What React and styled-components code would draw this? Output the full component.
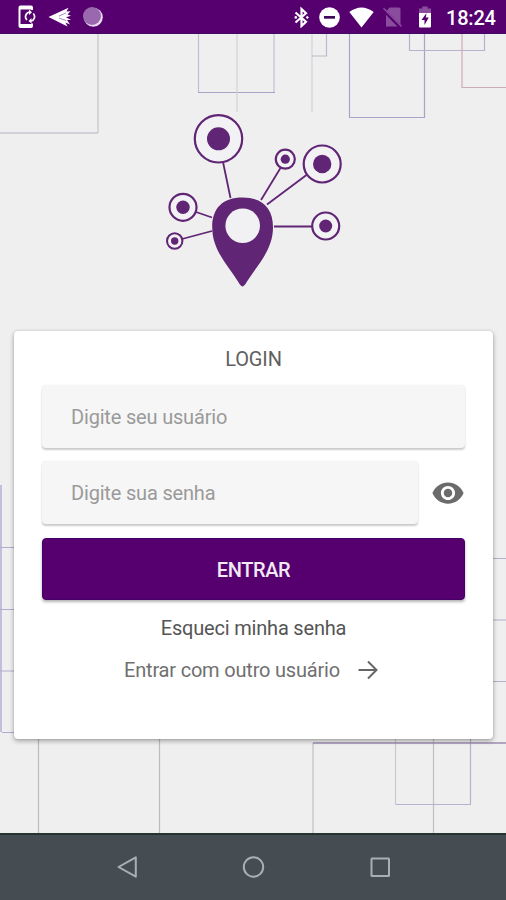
import React, { useState } from 'react';
import styled, { createGlobalStyle } from 'styled-components';

const GlobalStyle = createGlobalStyle`
  * {
    box-sizing: border-box;
  }

  body {
    margin: 0;
    background: #efefef;
    font-family: Roboto, 'Liberation Sans', sans-serif;
  }
`;

const Screen = styled.div`
  display: flex;
  flex-direction: column;
  width: 506px;
  height: 900px;
  overflow: hidden;
`;

const StatusBar = styled.header`
  display: flex;
  justify-content: space-between;
  align-items: center;
  flex: none;
  height: 34px;
  padding: 0 10px 0 18px;
  background: #560070;
  border-bottom: 1px solid #410a62;
  color: #fff;
`;

const StatusGroup = styled.div`
  display: flex;
  align-items: center;
  gap: ${(props) => props.$gap}px;
`;

const StatusIcon = styled.svg`
  display: block;
  flex: none;
  margin-left: ${(props) => props.$nudge || 0}px;
`;

const Clock = styled.span`
  width: 50px;
  margin-left: -1px;
  font-size: 20px;
  font-weight: 500;
  line-height: 24px;
  padding-top: 2px;
  letter-spacing: -0.2px;
  white-space: nowrap;
`;

const Main = styled.main`
  position: relative;
  display: flex;
  flex-direction: column;
  align-items: center;
  flex: 1;
  padding-top: 80px;
  background: #efefef;
`;

const Backdrop = styled.svg`
  position: absolute;
  top: 0;
  left: 0;
`;

const Logo = styled.svg`
  position: relative;
  display: block;
  flex: none;
  overflow: visible;
`;

const Card = styled.form`
  position: relative;
  display: flex;
  flex-direction: column;
  width: 479px;
  height: 408px;
  margin-top: 43px;
  margin-left: 1px;
  padding: 16px 28px 0;
  background: #fff;
  border-radius: 4px;
  box-shadow: 0 2px 5px rgba(0, 0, 0, 0.32), 0 0 2px rgba(0, 0, 0, 0.14);
`;

const Title = styled.h1`
  margin: 0 0 14px;
  font-size: 20px;
  font-weight: 400;
  line-height: 24px;
  letter-spacing: -0.1px;
  text-align: center;
  color: #606060;
`;

const Field = styled.input`
  display: block;
  width: 100%;
  min-width: 0;
  height: 63px;
  padding: 1px 29px 0;
  border: none;
  border-radius: 4px;
  outline: none;
  background: #f6f6f6;
  box-shadow: 0 2px 2px rgba(0, 0, 0, 0.2), 0 0 1px rgba(0, 0, 0, 0.12);
  font-family: inherit;
  font-size: 20px;
  letter-spacing: -0.18px;
  color: #555;

  &::placeholder {
    color: #9a9a9a;
    opacity: 1;
  }
`;

const PasswordRow = styled.div`
  display: flex;
  align-items: center;
  gap: 13px;
  margin: 13px 0 14px;
`;

const EyeButton = styled.button`
  display: flex;
  flex: none;
  padding: 0;
  border: none;
  background: none;
  color: #6b6b6b;
  cursor: pointer;
`;

const SubmitButton = styled.button`
  flex: none;
  height: 62px;
  padding: 1px 0 0;
  border: 1px solid #450068;
  border-radius: 4px;
  background: #560070;
  box-shadow: 0 2px 3px rgba(0, 0, 0, 0.3);
  font-family: inherit;
  font-size: 20px;
  font-weight: 500;
  letter-spacing: -0.4px;
  color: #f2e9f5;
  cursor: pointer;
`;

const LinkButton = styled.button`
  display: flex;
  justify-content: center;
  align-items: center;
  gap: 16px;
  margin-top: ${(props) => props.$top}px;
  padding: 0 ${(props) => props.$inset || 0}px 0 0;
  border: none;
  background: none;
  font-family: inherit;
  font-size: 20px;
  line-height: 24px;
  letter-spacing: -0.19px;
  color: ${(props) => props.$color};
  cursor: pointer;
`;

const NavBar = styled.nav`
  display: flex;
  justify-content: center;
  align-items: center;
  gap: 102px;
  flex: none;
  height: 67px;
  padding-bottom: 2px;
  border-top: 2px solid #27332f;
  background: #454d52;
`;

const NavIcon = styled.svg`
  display: block;
  fill: none;
  stroke: #a9b0b2;
  stroke-width: 2;
  stroke-linejoin: round;
`;

const lines = [
  ['M98 0V99', '#c4c1ca'],
  ['M0 99H98', '#b5b3bf'],
  ['M198.500 0V58M274 0V58', '#c3bfd2'],
  ['M198 58.500H275', '#aaa3c4'],
  ['M237 0V78M312 0V78', '#d3d1d8'],
  ['M312 22H326.500V0', '#bdb8cf'],
  ['M349.500 0V83.500H424.500V0', '#aaa3c9'],
  ['M409.500 0V16.500H484.500V0', '#b7b2ca'],
  ['M462 0V53.500H506', '#cfabb7'],
  ['M1 451V698', '#c4bedb', 2],
  ['M0 513.500H14M0 575.500H14M0 637H14M2 698.500H14', '#b2abcd'],
  ['M493 524.500H506M493 586H506M493 647.500H506', '#b5b0cb'],
  ['M38.500 704V800M159.500 704V800', '#bcbbbf'],
  ['M313 709V800M433.500 704V800', '#c0bec6'],
  ['M395.500 704V770', '#cbc8d2'],
  ['M470.500 704V770M395.500 770.500H471', '#b8b1d0'],
  ['M313 709H506', '#9c8db3', 1.5],
];

const nodes = [
  { cx: 53.5, cy: 24.8, r: 23.7, dot: 11.5, sw: 2.2 },
  { cx: 120.3, cy: 45.2, r: 9.5, dot: 4.6, sw: 2.2 },
  { cx: 157.2, cy: 50, r: 18.5, dot: 9.2, sw: 2.2 },
  { cx: 18, cy: 93.3, r: 13.5, dot: 6.7, sw: 2.2 },
  { cx: 9.7, cy: 127, r: 7.7, dot: 3.7, sw: 2 },
  { cx: 160.7, cy: 112, r: 13.5, dot: 6.5, sw: 2.2 },
];

const App = () => {
  const [showPassword, setShowPassword] = useState(false);

  return (
    <>
      <GlobalStyle />
      <Screen>
        <StatusBar>
          <StatusGroup $gap={12}>
            <StatusIcon width="18" height="24" viewBox="0 0 18 24">
              <path d="M14 5V2.500Q14 1.500 13 1.500H2.500Q1.500 1.500 1.500 2.500V21Q1.500 22 2.500 22H13Q14 22 14 21V18.500" fill="none" stroke="#fff" strokeWidth="2" />
              <path d="M1.500 3H14M1.500 20.500H14" stroke="#fff" strokeWidth="3" />
              <path d="M12 7.200A4.500 4.500 0 0 0 9 15M13 16A4.500 4.500 0 0 0 15.300 8.500" fill="none" stroke="#fff" strokeWidth="1.700" />
              <path d="M11 4.500V10L14 7.200ZM13.500 13V18.500L10.500 16Z" fill="#fff" />
            </StatusIcon>
            <StatusIcon width="24" height="20" viewBox="0 0 24 20">
              <path d="M0.500 10L20.500 0.800L18.500 4.500L22.500 4.300L19.500 7.500L23 8.800L18 10.200L23 13L19 13L22 17.500L17.500 15.500L19.500 19.500Z" fill="#fff" />
              <path d="M11 9L18 6M11 11L18 13.500" stroke="#8b54a0" strokeWidth="0.700" />
            </StatusIcon>
            <StatusIcon width="20" height="20" viewBox="0 0 20 20" $nudge={-1}>
              <circle cx="10.300" cy="10.300" r="9.500" fill="#eadcf0" />
              <circle cx="9" cy="9" r="9" fill="#9a68ae" />
            </StatusIcon>
          </StatusGroup>
          <StatusGroup $gap={10}>
            <StatusIcon width="15" height="22" viewBox="0 0 15 22">
              <path d="M1.500 6.500L12 15.800L7.500 20V3L12 7.200L1.500 16.500" fill="none" stroke="#fff" strokeWidth="2.200" />
              <path d="M13.300 9.700L14.900 11.400L13.300 13.100L11.700 11.400Z" fill="#fff" />
              <circle cx="1.800" cy="11.400" r="1.300" fill="#fff" />
            </StatusIcon>
            <StatusIcon width="21" height="22" viewBox="0 0 21 22">
              <circle cx="10.500" cy="11.500" r="10.300" fill="#fff" />
              <rect x="5" y="10" width="11" height="2.700" fill="#3c0a5c" />
            </StatusIcon>
            <StatusIcon width="25" height="22" viewBox="0 0 25 22" $nudge={-1}>
              <path d="M0.300 6Q12.500 -3 24.700 6L12.500 21.500Z" fill="#fff" />
            </StatusIcon>
            <StatusIcon width="19" height="22" viewBox="0 0 19 22" $nudge={-1}>
              <path d="M6.500 1.500H16Q17.500 1.500 17.500 3V20.500H3V5.500Z" fill="#8a4d9e" />
              <path d="M0 3.300L18.300 22" stroke="#560070" strokeWidth="3.400" />
              <path d="M0.500 2.300L18.500 20.500" stroke="#8a4d9e" strokeWidth="1.500" />
            </StatusIcon>
            <StatusIcon width="24" height="22" viewBox="0 0 24 22" $nudge={1}>
              <path d="M9.300 0.500H14.700V2.500H18V7H6V2.500H9.300Z" fill="#8a4d9e" />
              <path d="M6 7H18V20.500Q18 21.500 17 21.500H7Q6 21.500 6 20.500Z" fill="#fff" />
              <path d="M13.500 7L8.500 14H11.500V19L15.800 11.500H12.800Z" fill="#560070" />
            </StatusIcon>
            <Clock>18:24</Clock>
          </StatusGroup>
        </StatusBar>

        <Main>
          <Backdrop width="506" height="799" viewBox="0 0 506 799">
            {lines.map(([d, color, width]) => (
              <path key={d} d={d} fill="none" stroke={color} strokeWidth={width || 1.2} />
            ))}
          </Backdrop>

          <Logo width="176" height="174" viewBox="0 0 176 174">
            <g stroke="#602574" strokeWidth="1.800">
              <path d="M58 48L65.500 84" />
              <path d="M115.500 54L96 86" />
              <path d="M141.500 61L102 90.500" />
              <path d="M31 98L47 103.500" />
              <path d="M17 125L47 117" />
              <path d="M109 112.500H147" />
            </g>
            {nodes.map((node) => (
              <g key={node.cx}>
                <circle cx={node.cx} cy={node.cy} r={node.r} fill="#f2f1f3" stroke="#602574" strokeWidth={node.sw} />
                <circle cx={node.cx} cy={node.cy} r={node.dot} fill="#602574" />
              </g>
            ))}
            <path
              d="M77.500 172.500Q75.500 172 73 167.500C62 150 47.200 136 47.200 113C47.200 94 58 83.500 77.500 83.500S108 94 108 113C108 136 93 150 82 167.500Q79.500 172 77.500 172.500Z"
              fill="#602574"
            />
            <circle cx="77.700" cy="111.700" r="17.300" fill="#f1f0f2" />
          </Logo>

          <Card onSubmit={(e) => e.preventDefault()}>
            <Title>LOGIN</Title>
            <Field placeholder="Digite seu usuário" />
            <PasswordRow>
              <Field type={showPassword ? 'text' : 'password'} placeholder="Digite sua senha" />
              <EyeButton type="button" aria-label="Mostrar senha" onClick={() => setShowPassword(!showPassword)}>
                <svg width="34" height="34" viewBox="0 0 24 24">
                  <path
                    fill="currentColor"
                    d="M12 4.500C7 4.500 2.730 7.610 1 12c1.730 4.390 6 7.500 11 7.500s9.270-3.110 11-7.500c-1.730-4.390-6-7.500-11-7.500zM12 17c-2.760 0-5-2.240-5-5s2.240-5 5-5 5 2.240 5 5-2.240 5-5 5zm0-8c-1.660 0-3 1.340-3 3s1.340 3 3 3 3-1.340 3-3-1.340-3-3-3z"
                  />
                </svg>
              </EyeButton>
            </PasswordRow>
            <SubmitButton type="submit">ENTRAR</SubmitButton>
            <LinkButton type="button" $top={16} $color="#555">Esqueci minha senha</LinkButton>
            <LinkButton type="button" $top={18} $inset={3} $color="#707070">
              Entrar com outro usuário
              <svg width="24" height="24" viewBox="0 0 24 24" fill="none" stroke="#666" strokeWidth="2">
                <path d="M2.500 12H20M12 3.500L20.500 12L12 20.500" />
              </svg>
            </LinkButton>
          </Card>
        </Main>

        <NavBar>
          <NavIcon width="24" height="24" viewBox="0 0 24 24">
            <path d="M3.500 12L20.800 2.300V21.700Z" />
          </NavIcon>
          <NavIcon width="24" height="24" viewBox="0 0 24 24">
            <circle cx="12.500" cy="12" r="9.700" />
          </NavIcon>
          <NavIcon width="24" height="24" viewBox="0 0 24 24">
            <rect x="4.500" y="3.500" width="17.500" height="17.500" rx="0.500" />
          </NavIcon>
        </NavBar>
      </Screen>
    </>
  );
};

export default App;
